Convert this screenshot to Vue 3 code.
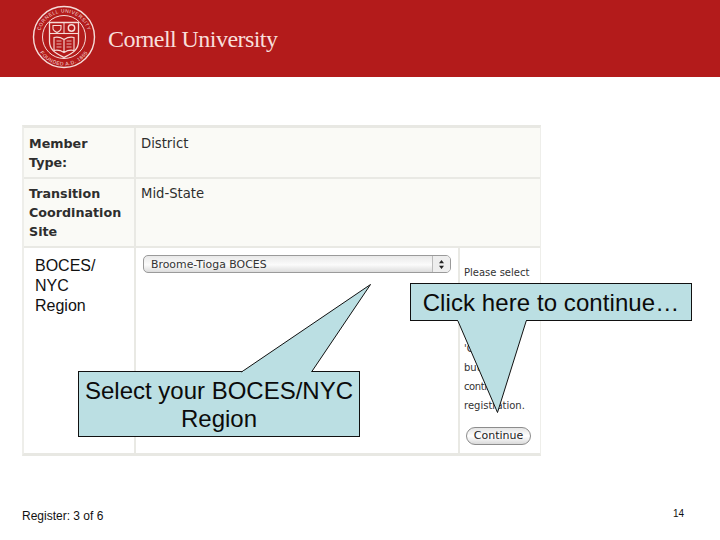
<script setup>
const visibleLines = [
  { text: "'Continue'" },
  { text: 'button to' },
  { text: 'continue', narrow: true },
  { text: 'registration.' },
]
</script>

<template>
  <div class="slide">
    <header class="banner">
      <svg class="seal" width="64" height="64" viewBox="0 0 64 64" aria-hidden="true">
        <defs>
          <path id="sealTop" d="M7.5 32a24.5 24.5 0 0 1 49 0" />
          <path id="sealBottom" d="M3.5 32a28.5 28.5 0 0 0 57 0" />
        </defs>
        <g fill="none" stroke="#f6dcd8">
          <circle cx="32" cy="32" r="30.5" stroke-width="1.4" />
          <circle cx="32" cy="32" r="21.5" stroke-width="1" />
          <g transform="translate(0 2.500)">
            <path d="M17.500 15h29v19c0 9-7 12-14.500 16c-7.500-4-14.500-7-14.500-16z" stroke-width="1.3" />
            <path d="M17.500 26h29" stroke-width="1.1" />
            <path d="M32 15v11" stroke-width="1" />
            <path d="M21 18h8v3c0 2-2 3-4 4c-2-1-4-2-4-4z" stroke-width="1.1" />
            <circle cx="39.500" cy="20.500" r="3.200" stroke-width="1.4" />
            <path d="M22 30c4-1 7 0 10 2c3-2 6-3 10-2v13c-4-1-7 0-10 2c-3-2-6-3-10-2zM32 32v13" stroke-width="1.1" />
            <path d="M24.500 33.500h5M24.500 36.500h5M24.500 39.500h5M34.500 33.500h5M34.500 36.500h5M34.500 39.500h5" stroke-width=".8" />
          </g>
        </g>
        <text class="seal-text"><textPath href="#sealTop" startOffset="50%" text-anchor="middle">CORNELL UNIVERSITY</textPath></text>
        <text class="seal-text"><textPath href="#sealBottom" startOffset="50%" text-anchor="middle">FOUNDED A.D. 1865</textPath></text>
      </svg>
      <span class="wordmark">Cornell University</span>
    </header>

    <main class="content">
      <div class="form-shot">
        <div class="row row-one">
          <div class="label">Member Type:</div>
          <div class="value">District</div>
        </div>
        <div class="row row-two">
          <div class="label">Transition Coordination Site</div>
          <div class="value">Mid-State</div>
        </div>
        <div class="row row-three">
          <div class="region-label">BOCES/<br />NYC<br />Region</div>
          <div class="select-cell">
            <div class="select">
              <span class="select-text">Broome-Tioga BOCES</span>
              <span class="select-arrows">
                <svg width="7" height="11" viewBox="0 0 7 11" aria-hidden="true">
                  <path d="M3.500 1L6 4.200H1zM3.500 10L1 6.800h5z" fill="#222" />
                </svg>
              </span>
            </div>
          </div>
          <div class="help-cell">
            <div class="help-text">
              <div class="help-first">Please select</div>
              <div
                v-for="line in visibleLines"
                :key="line.text"
                :class="{ narrow: line.narrow }"
              >{{ line.text }}</div>
            </div>
            <div class="continue-btn">Continue</div>
          </div>
        </div>
      </div>

      <div class="callout callout-region">
        <svg class="pointer" width="140" height="94" viewBox="0 0 140 94" aria-hidden="true">
          <path d="M.5 92L129.500 4.500L70.500 92" fill="#bbdfe3" stroke="#111" />
          <path d="M2 91h68v4H2z" fill="#bbdfe3" />
        </svg>
        Select your BOCES/NYC Region
      </div>

      <div class="callout callout-continue">
        <svg class="pointer" width="74" height="96" viewBox="0 0 74 96" aria-hidden="true">
          <path d="M2.500 1L42.500 93.500L71.500 1" fill="#bbdfe3" stroke="#111" />
          <path d="M3 0h68v2H3z" fill="#bbdfe3" />
        </svg>
        Click here to continue…
      </div>
    </main>

    <footer class="foot">
      <span class="foot-left">Register: 3 of 6</span>
      <span class="foot-right">14</span>
    </footer>
  </div>
</template>

<style scoped>
.slide {
  width: 720px;
  height: 540px;
  overflow: hidden;
  background: #fff;
  display: flex;
  flex-direction: column;
  font-family: "Liberation Sans", Arial, sans-serif;
}
.banner {
  height: 77px;
  flex: none;
  background: #b31b1b;
  display: flex;
  align-items: center;
  padding-left: 31.500px;
  gap: 12.500px;
}
.seal { flex: none; margin-top: -3px; }
.seal-text {
  font: 5px "Liberation Sans", sans-serif;
  fill: #f6dcd8;
  letter-spacing: .5px;
}
.wordmark {
  font: 24px "Liberation Serif", serif;
  letter-spacing: -.55px;
  color: #f8dfdb;
  margin-top: 1px;
}
.content {
  position: relative;
  height: 379px;
  flex: none;
  padding: 48px 0 0 22px;
  box-sizing: border-box;
}
.form-shot {
  width: 519px;
  height: 331px;
  box-sizing: border-box;
  border-top: 3px solid #e8e8e3;
  border-bottom: 3px solid #e8e8e3;
  border-left: 2px solid #eeeeea;
  border-right: 1px solid #eeeeea;
  display: flex;
  flex-direction: column;
  font-family: "DejaVu Sans", sans-serif;
  color: #2e2e2e;
}
.row { display: flex; flex: none; }
.row-one { height: 49px; background: #fafaf6; border-bottom: 2px solid #e9e9e4; }
.row-two { height: 67px; background: #fafaf6; border-bottom: 2px solid #e9e9e4; }
.row-three { flex: 1; background: #fff; }
.label {
  width: 112px;
  box-sizing: border-box;
  padding: 6px 5px 0;
  font-size: 12.700px;
  line-height: 19px;
  font-weight: 700;
  border-right: 2px solid #e9e9e4;
  flex: none;
}
.row-two .label, .row-two .value { padding-top: 5px; }
.value {
  padding: 6px 5px 0;
  font-size: 13.200px;
  line-height: 19px;
}
.region-label {
  width: 112px;
  box-sizing: border-box;
  flex: none;
  padding: 8px 0 0 11px;
  font: 16px/20px "Liberation Sans", Arial, sans-serif;
  color: #111;
  border-right: 2px solid #e9e9e4;
}
.select-cell {
  width: 324px;
  flex: none;
  box-sizing: border-box;
  padding: 7px 0 0 7px;
  border-right: 2px solid #e9e9e4;
}
.select {
  width: 308px;
  height: 18px;
  box-sizing: border-box;
  border: 1px solid #9a9a9a;
  border-radius: 5px;
  background: linear-gradient(#e9e9e9, #fbfbfb 55%, #dcdcdc);
  display: flex;
  align-items: center;
  justify-content: space-between;
  padding-left: 7px;
}
.select-text { font-size: 10.900px; color: #333; }
.select-arrows {
  width: 17px;
  height: 100%;
  border-left: 1px solid #bbb;
  display: flex;
  align-items: center;
  justify-content: center;
  background: #eeeeee;
  border-radius: 0 4px 4px 0;
}
.help-cell {
  flex: 1;
  padding: 15px 0 0 4px;
}
.help-text {
  font-size: 10px;
  line-height: 19px;
  color: #333;
}
.help-first { margin-bottom: 57px; }
.narrow { letter-spacing: -.4px; }
.continue-btn {
  width: 65px;
  height: 18px;
  box-sizing: border-box;
  margin: 12px 0 0 2px;
  border: 1px solid #8c8c8c;
  border-radius: 9px;
  background: linear-gradient(#e4e4e4, #fff 50%, #dadada);
  font-size: 11px;
  line-height: 16px;
  text-align: center;
  color: #222;
}
.callout {
  position: absolute;
  box-sizing: border-box;
  background: #bbdfe3;
  border: 1px solid #111;
  color: #0b0b0b;
  text-align: center;
  font-size: 24px;
  line-height: 28px;
}
.callout-region {
  left: 78px;
  top: 294px;
  width: 282px;
  height: 66px;
  padding-top: 5px;
}
.callout-continue {
  left: 410px;
  top: 206px;
  width: 282px;
  height: 38px;
  line-height: 37px;
  letter-spacing: .08px;
}
.pointer { position: absolute; overflow: visible; }
.callout-region .pointer { left: 162px; top: -92px; }
.callout-continue .pointer { left: 44px; top: 35px; }
.foot {
  flex: 1;
  position: relative;
}
.foot-left {
  position: absolute;
  left: 22px;
  top: 53px;
  font-size: 12px;
  color: #111;
}
.foot-right {
  position: absolute;
  left: 673px;
  top: 52px;
  font-size: 10px;
  color: #111;
}
</style>

<style>
html, body { margin: 0; background: #fff; }
</style>
